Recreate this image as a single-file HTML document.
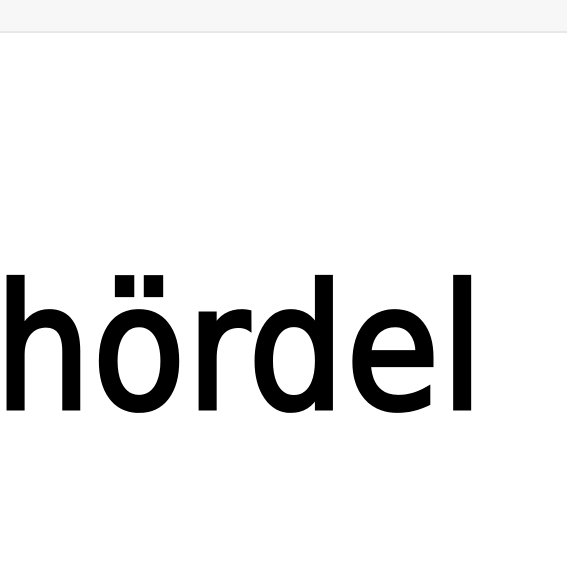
<!DOCTYPE html>
<html><head><style>
html,body{margin:0;padding:0;width:567px;height:567px;overflow:hidden;background:#fff}
.bar{position:absolute;left:0;top:0;width:567px;height:31px;background:#f7f7f7;border-bottom:2px solid #e8e8e8}
.t{position:absolute;left:-5px;top:263px;font-family:"DejaVu Sans",sans-serif;font-weight:normal;font-size:172px;line-height:1;color:#000;white-space:nowrap;transform:scaleX(0.88);transform-origin:0 0;-webkit-text-stroke:5px #000;letter-spacing:2px}
</style></head><body>
<div class="bar"></div>
<div class="t">hördel</div>
</body></html>
